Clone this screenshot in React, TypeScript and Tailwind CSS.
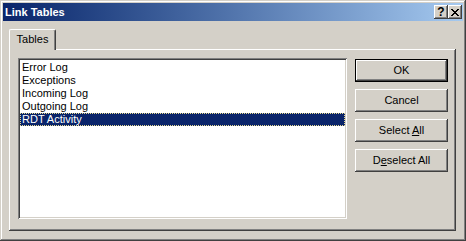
import React from "react";

const raised =
  "shadow-[inset_-1px_-1px_0_#404040,inset_1px_1px_0_#ffffff,inset_-2px_-2px_0_#808080,inset_2px_2px_0_#d4d0c8]";

function CaptionButton({ children }: { children: React.ReactNode }) {
  return (
    <div
      className={`w-[14px] h-[14px] bg-[#d4d0c8] flex items-center justify-center ${raised}`}
    >
      {children}
    </div>
  );
}

function PushButton({
  children,
  isDefault,
}: {
  children: React.ReactNode;
  isDefault?: boolean;
}) {
  if (isDefault) {
    return (
      <div className="w-[93px] h-[23px] border border-black bg-[#d4d0c8] flex items-center justify-center shadow-[inset_-1px_-1px_0_#404040,inset_1px_1px_0_#ffffff,inset_-2px_-2px_0_#808080]">
        <span className="leading-none">{children}</span>
      </div>
    );
  }
  return (
    <div
      className={`w-[93px] h-[23px] bg-[#d4d0c8] flex items-center justify-center ${raised}`}
    >
      <span className="leading-none">{children}</span>
    </div>
  );
}

const items = ["Error Log", "Exceptions", "Incoming Log", "Outgoing Log", "RDT Activity"];

export default function App() {
  return (
    <div className="w-[466px] h-[241px] bg-[#d4d0c8] p-[3px] flex flex-col shadow-[inset_-1px_-1px_0_#404040,inset_1px_1px_0_#d4d0c8,inset_-2px_-2px_0_#808080,inset_2px_2px_0_#ffffff] font-['Liberation_Sans',Arial,sans-serif] text-[11px] text-black select-none">
      {/* Title bar */}
      <div className="h-[18px] shrink-0 flex items-center bg-linear-to-r from-[#0a246a] to-[#a6caf0] pl-[2px] pr-[1px]">
        <span className="flex-1 font-bold text-white leading-none">Link Tables</span>
        <CaptionButton>
          <span className="font-bold text-[12px] leading-none text-black">?</span>
        </CaptionButton>
        <CaptionButton>
          <svg width="8" height="7" viewBox="0 0 8 7" shapeRendering="crispEdges">
            <path
              d="M0 0h2v1H0zM6 0h2v1H6zM1 1h2v1H1zM5 1h2v1H5zM2 2h4v1H2zM3 3h2v1H3zM2 4h4v1H2zM1 5h2v1H1zM5 5h2v1H5zM0 6h2v1H0zM6 6h2v1H6z"
              fill="#000"
            />
          </svg>
        </CaptionButton>
      </div>

      {/* Body */}
      <div className="flex-1 flex flex-col pt-[8px] pl-[6px] pr-[7px] pb-[7px]">
        {/* Tab strip */}
        <div className="flex shrink-0">
          <div className="relative z-10 -mb-px h-[21px] w-[47px] bg-[#d4d0c8] border-l border-t border-r border-l-white border-t-white border-r-[#404040] rounded-t-[2px] shadow-[inset_-1px_0_0_#808080] flex items-center justify-center pb-[1px]">
            <span className="leading-none">Tables</span>
          </div>
        </div>

        {/* Tab panel */}
        <div className="flex-1 flex pl-[9px] pt-[9px] pr-[8px] shadow-[inset_-1px_-1px_0_#404040,inset_1px_1px_0_#ffffff,inset_-2px_-2px_0_#808080]">
          <div className="w-[329px] h-[161px] shrink-0 bg-white px-[2px] pt-[3px] pb-[2px] shadow-[inset_1px_1px_0_#808080,inset_-1px_-1px_0_#ffffff,inset_2px_2px_0_#404040,inset_-2px_-2px_0_#d4d0c8]">
            {items.map((it, i) =>
              i === items.length - 1 ? (
                <div
                  key={it}
                  className="h-[13px] leading-[13px] pl-[2px] whitespace-nowrap bg-[#0a246a] text-white outline-1 outline-dotted outline-[#e6d98f] -outline-offset-1"
                >
                  {it}
                </div>
              ) : (
                <div key={it} className="h-[13px] leading-[13px] pl-[2px] whitespace-nowrap">
                  {it}
                </div>
              )
            )}
          </div>

          <div className="ml-[8px] mt-[1px] flex flex-col gap-[7px]">
            <PushButton isDefault>OK</PushButton>
            <PushButton>Cancel</PushButton>
            <PushButton>
              Select <u className="underline-offset-[1px]">A</u>ll
            </PushButton>
            <PushButton>
              D<u className="underline-offset-[1px]">e</u>select All
            </PushButton>
          </div>
        </div>
      </div>
    </div>
  );
}
